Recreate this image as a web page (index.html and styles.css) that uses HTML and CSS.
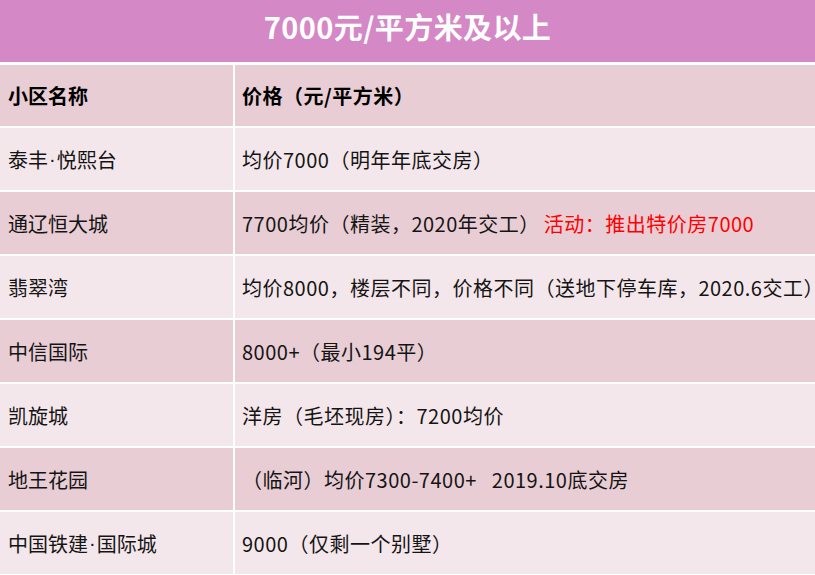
FILE: index.html
```html
<!DOCTYPE html>
<html lang="zh-CN">
<head>
<meta charset="utf-8">
<title>7000元/平方米及以上</title>
<link rel="stylesheet" href="styles.css">
</head>
<body>
<div class="page">
  <div class="title">7000元/平方米及以上</div>
  <div class="table">
    <div class="cell head name">小区名称</div>
    <div class="cell head price">价格（元/平方米）</div>

    <div class="cell light name">泰丰<span class="dot">·</span>悦熙台</div>
    <div class="cell light price">均价7000（明年年底交房）</div>

    <div class="cell dark name">通辽恒大城</div>
    <div class="cell dark price">7700均价（精装，2020年交工）<span class="promo">活动：推出特价房7000</span></div>

    <div class="cell light name">翡翠湾</div>
    <div class="cell light price">均价8000，楼层不同，价格不同（送地下停车库，2020.6交工）</div>

    <div class="cell dark name">中信国际</div>
    <div class="cell dark price">8000+（最小194平）</div>

    <div class="cell light name">凯旋城</div>
    <div class="cell light price">洋房（毛坯现房）：7200均价</div>

    <div class="cell dark name">地王花园</div>
    <div class="cell dark price">（临河）均价7300-7400+&nbsp;&nbsp;&nbsp;2019.10底交房</div>

    <div class="cell light name">中国铁建<span class="dot">·</span>国际城</div>
    <div class="cell light price">9000（仅剩一个别墅）</div>
  </div>
</div>
</body>
</html>
```

FILE: styles.css
```css
html, body {
  margin: 0;
  padding: 0;
  background: #ffffff;
  overflow: hidden;
}

.page {
  width: 815px;
  height: 575px;
  overflow: hidden;
  font-family: "Noto Sans CJK SC", "Noto Sans", sans-serif;
}

.title {
  height: 62px;
  margin-bottom: 3px;
  background: #d488c5;
  color: #ffffff;
  font-size: 29px;
  font-weight: 700;
  display: flex;
  align-items: center;
  justify-content: center;
  padding-bottom: 10px;
  box-sizing: border-box;
  letter-spacing: 0.4px;
}

.table {
  display: grid;
  grid-template-columns: 233px 620px;
  grid-template-rows: 61px repeat(7, 62px);
  gap: 2px 2px;
  width: 860px;
}

.cell {
  display: flex;
  align-items: center;
  font-size: 20px;
  color: #141414;
  white-space: nowrap;
  overflow: hidden;
}

.name {
  padding-left: 8px;
}

.price {
  padding-left: 7px;
  letter-spacing: 0.5px;
}

.dot {
  font-family: "Liberation Sans", sans-serif;
  padding: 0 1px;
}

.head {
  background: #e8cdd4;
  color: #000000;
  font-weight: 700;
}

.dark {
  background: #e8cdd4;
}

.light {
  background: #f4e7eb;
}

.promo {
  color: #ff0000;
  margin-left: 4px;
}
```
